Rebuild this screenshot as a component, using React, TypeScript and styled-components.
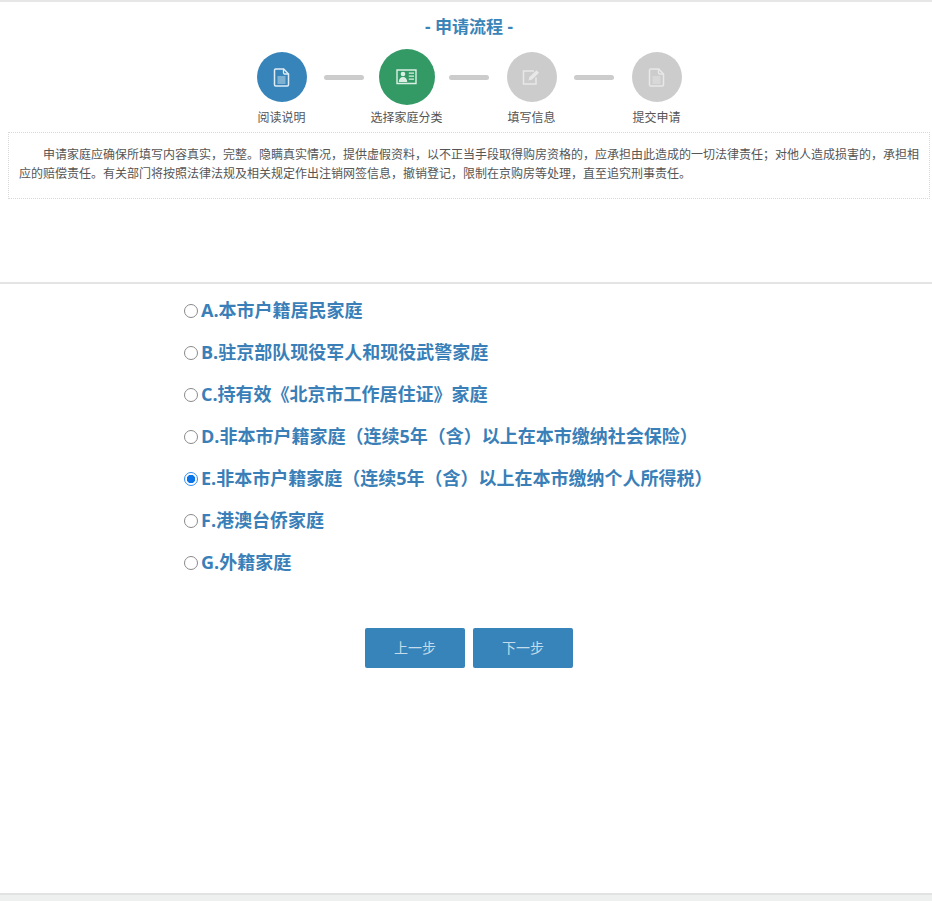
import React from 'react'
import styled, { createGlobalStyle } from 'styled-components'

const GlobalStyle = createGlobalStyle`
  html, body {
    margin: 0;
    padding: 0;
    background: #fff;
  }
  body {
    font-family: "Open Sans", "Noto Sans CJK SC", sans-serif;
  }
`

const DocIcon = () => (
  <svg width="17" height="19" viewBox="0 0 17 19" fill="none" stroke="currentColor" strokeWidth="1.5">
    <path d="M1.500 2.200q0-1.200 1.200-1.200h8l4.800 5v10.800q0 1.200-1.200 1.200H2.700q-1.200 0-1.200-1.200z" />
    <path d="M10.500 1v3.800q0 1.200 1.200 1.200h3.800" strokeWidth="1.300" />
    <path d="M4.500 9h8M4.500 11h8M4.500 13h8M4.500 15h8" strokeWidth="1.200" opacity="0.85" />
  </svg>
)

const CardIcon = () => (
  <svg width="21" height="16" viewBox="0 0 21 16" fill="none" stroke="currentColor" strokeWidth="1.400">
    <path d="M1 1h19v13.500H1z" />
    <circle cx="7" cy="5" r="2.300" fill="currentColor" stroke="none" />
    <path d="M2.800 13c0-3 1.600-5 4.200-5s4.200 2 4.200 5z" fill="currentColor" stroke="none" />
    <path d="M12.800 4.200h5.200M12.800 7.200h5.200M12.800 10.200h5.200" strokeWidth="1.200" />
  </svg>
)

const EditIcon = () => (
  <svg width="19" height="16" viewBox="0 0 19 16" fill="none" stroke="currentColor" strokeWidth="1.500">
    <path d="M12 2H1.500v13h12.500V8.500" />
    <path d="M6.500 11.500l1-3.500 7-6.800 2.600 2.500-7 6.800z" fill="currentColor" stroke="none" />
  </svg>
)

const steps = [
  { label: '阅读说明', tone: 'blue', icon: <DocIcon /> },
  { label: '选择家庭分类', tone: 'green', icon: <CardIcon /> },
  { label: '填写信息', tone: 'gray', icon: <EditIcon /> },
  { label: '提交申请', tone: 'gray', icon: <DocIcon /> },
] as const

const options = [
  'A.本市户籍居民家庭',
  'B.驻京部队现役军人和现役武警家庭',
  'C.持有效《北京市工作居住证》家庭',
  'D.非本市户籍家庭（连续5年（含）以上在本市缴纳社会保险）',
  'E.非本市户籍家庭（连续5年（含）以上在本市缴纳个人所得税）',
  'F.港澳台侨家庭',
  'G.外籍家庭',
]

export default function App() {
  return (
    <Page>
      <GlobalStyle />
      <Header>
        <Title>- 申请流程 -</Title>
        <Flow>
          {steps.map((step, i) => (
            <React.Fragment key={step.label}>
              {i > 0 && <Connector />}
              <Circle $tone={step.tone}>{step.icon}</Circle>
            </React.Fragment>
          ))}
          {steps.map((step, i) => (
            <StepLabel key={step.label} $column={i * 2 + 1}>
              {step.label}
            </StepLabel>
          ))}
        </Flow>
        <Notice>
          申请家庭应确保所填写内容真实，完整。隐瞒真实情况，提供虚假资料，以不正当手段取得购房资格的，应承担由此造成的一切法律责任；对他人造成损害的，承担相应的赔偿责任。有关部门将按照法律法规及相关规定作出注销网签信息，撤销登记，限制在京购房等处理，直至追究刑事责任。
        </Notice>
      </Header>
      <Body>
        <OptionList>
          {options.map((text) => (
            <Option key={text}>
              <Radio type="radio" name="family" defaultChecked={text.startsWith('E.')} />
              {text}
            </Option>
          ))}
        </OptionList>
        <Actions>
          <Button type="button">上一步</Button>
          <Button type="button">下一步</Button>
        </Actions>
      </Body>
      <Footer />
    </Page>
  )
}

const Page = styled.div`
  display: flex;
  flex-direction: column;
  min-height: 100vh;
  box-sizing: border-box;
  border-top: 2px solid #e6e6e6;
`
const Header = styled.div`
  height: 282px;
  box-sizing: border-box;
  padding: 14px 2px 0 8px;
  border-bottom: 2px solid #e4e4e4;
`
const Title = styled.div`
  height: 22px;
  line-height: 22px;
  text-align: center;
  font-size: 17px;
  font-weight: 700;
  color: #3a84b8;
`
const Flow = styled.div`
  display: grid;
  grid-template-columns: repeat(7, 62.5px);
  grid-template-rows: 56px auto;
  justify-content: center;
  justify-items: center;
  align-items: center;
  margin-top: 11px;
`
const toneColors = { blue: '#3784ba', green: '#339a66', gray: '#cccccc' }
const iconColors = { blue: '#dfecf5', green: '#dcefe4', gray: '#e8e8e8' }

const Circle = styled.div<{ $tone: 'blue' | 'green' | 'gray' }>`
  display: flex;
  align-items: center;
  justify-content: center;
  width: ${(p) => (p.$tone === 'green' ? 56 : 50)}px;
  height: ${(p) => (p.$tone === 'green' ? 56 : 50)}px;
  border-radius: 50%;
  background: ${(p) => toneColors[p.$tone]};
  color: ${(p) => iconColors[p.$tone]};
`
const Connector = styled.div`
  width: 40px;
  height: 5px;
  border-radius: 3px;
  background: #cccccc;
`
const StepLabel = styled.div<{ $column: number }>`
  grid-row: 2;
  grid-column: ${(p) => p.$column};
  margin-top: 4px;
  line-height: 18px;
  font-size: 12px;
  color: #555;
  white-space: nowrap;
`
const Notice = styled.div`
  height: 67px;
  box-sizing: border-box;
  margin-top: 5px;
  padding: 12px 10px 0;
  border: 1px dotted #d8d8d8;
  font-size: 12px;
  line-height: 19px;
  text-indent: 24px;
  color: #555;
`
const Body = styled.div`
  flex: 1;
  padding: 4px 0 0 184px;
`
const OptionList = styled.div`
  display: flex;
  flex-direction: column;
`
const Option = styled.label`
  display: flex;
  align-items: center;
  height: 42px;
  font-size: 18px;
  font-weight: 700;
  color: #3a7fb8;
  white-space: nowrap;
`
const Radio = styled.input`
  appearance: none;
  width: 14px;
  height: 14px;
  margin: 4px 3px 0 0;
  flex: none;
  box-sizing: border-box;
  border: 1px solid #8a8a8a;
  border-radius: 50%;
  background: #fff;

  &:checked {
    border-color: #2f8cf0;
    background: radial-gradient(circle, #0a74e8 0 4px, #fff 4.500px);
  }
`
const Actions = styled.div`
  display: flex;
  gap: 8px;
  margin: 46px 0 0 181px;
`
const Button = styled.button`
  width: 100px;
  height: 40px;
  padding: 0 0 2px;
  border: none;
  border-radius: 2px;
  background: #3784ba;
  color: #c4dceb;
  font-family: inherit;
  font-size: 14px;
`
const Footer = styled.div`
  height: 8px;
  box-sizing: border-box;
  border-top: 2px solid #e2e2e2;
  background: #eef0f0;
`
